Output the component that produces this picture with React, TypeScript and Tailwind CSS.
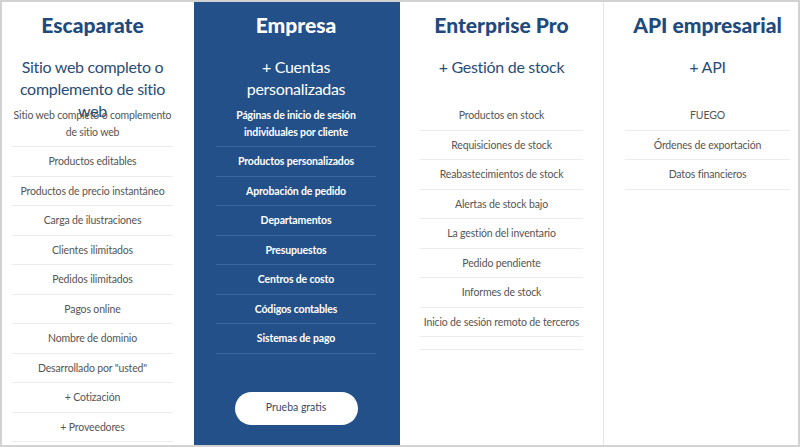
import React from "react";

type Col = {
  title: string;
  subtitle: string;
  items: string[];
  dark?: boolean;
  extraEmpty?: boolean;
  button?: boolean;
  cls: string;
};

const cols: Col[] = [
  {
    title: "Escaparate",
    subtitle: "Sitio web completo o complemento de sitio web",
    items: [
      "Sitio web completo o complemento de sitio web",
      "Productos editables",
      "Productos de precio instantáneo",
      "Carga de ilustraciones",
      "Clientes ilimitados",
      "Pedidos ilimitados",
      "Pagos online",
      "Nombre de dominio",
      'Desarrollado por "usted"',
      "+ Cotización",
      "+ Proveedores",
    ],
    cls: "w-[192px] pl-[10px] pr-[21px]",
  },
  {
    title: "Empresa",
    subtitle: "+ Cuentas personalizadas",
    items: [
      "Páginas de inicio de sesión individuales por cliente",
      "Productos personalizados",
      "Aprobación de pedido",
      "Departamentos",
      "Presupuestos",
      "Centros de costo",
      "Códigos contables",
      "Sistemas de pago",
    ],
    dark: true,
    button: true,
    cls: "w-[206px] pl-[22px] pr-[24px]",
  },
  {
    title: "Enterprise Pro",
    subtitle: "+ Gestión de stock",
    items: [
      "Productos en stock",
      "Requisiciones de stock",
      "Reabastecimientos de stock",
      "Alertas de stock bajo",
      "La gestión del inventario",
      "Pedido pendiente",
      "Informes de stock",
      "Inicio de sesión remoto de terceros",
    ],
    extraEmpty: true,
    cls: "w-[203px] px-[20px]",
  },
  {
    title: "API empresarial",
    subtitle: "+ API",
    items: ["FUEGO", "Órdenes de exportación", "Datos financieros"],
    cls: "flex-1 pl-[21px] pr-[8px]",
  },
];

function Column({ c }: { c: Col }) {
  const dark = !!c.dark;
  return (
    <div
      className={`${c.cls} h-full flex flex-col items-center ${
        dark ? "bg-[#24508a]" : "bg-white"
      }`}
    >
      <h2
        className={`mt-[9px] text-[21px] leading-[28px] font-black whitespace-nowrap ${
          dark ? "text-white" : "text-[#1f4a7e]"
        }`}
      >
        {c.title}
      </h2>
      <div
        className={`mt-[17px] h-[45px] w-full text-center text-[16px] tracking-[-0.3px] leading-[22px] ${
          dark ? "text-white" : "text-[#2a4d78]"
        }`}
      >
        {c.subtitle}
      </div>
      <ul className="w-full">
        {c.items.map((it, i) => (
          <li
            key={i}
            className={`py-[6px] text-center text-[10.5px] tracking-[-0.15px] leading-[16.5px] border-b ${
              dark
                ? "text-white font-bold border-[#3d67a0]"
                : "text-[#555555] border-[#ececec]"
            }`}
          >
            {it}
          </li>
        ))}
        {c.extraEmpty && <li className="h-[12.5px] border-b border-[#ececec]" />}
      </ul>
      {c.button && (
        <button className="mt-[38px] w-[123px] h-[33px] rounded-full bg-white text-[10.5px] text-[#3b4a66]">
          Prueba gratis
        </button>
      )}
    </div>
  );
}

export default function App() {
  return (
    <div
      className="w-[800px] h-[447px] bg-white border-2 border-[#d2d2d2] flex overflow-hidden"
      style={{ fontFamily: "Lato, 'Open Sans', sans-serif" }}
    >
      <Column c={cols[0]} />
      <Column c={cols[1]} />
      <Column c={cols[2]} />
      <div className="w-px h-full bg-[#e6e6e6]" />
      <Column c={cols[3]} />
    </div>
  );
}
